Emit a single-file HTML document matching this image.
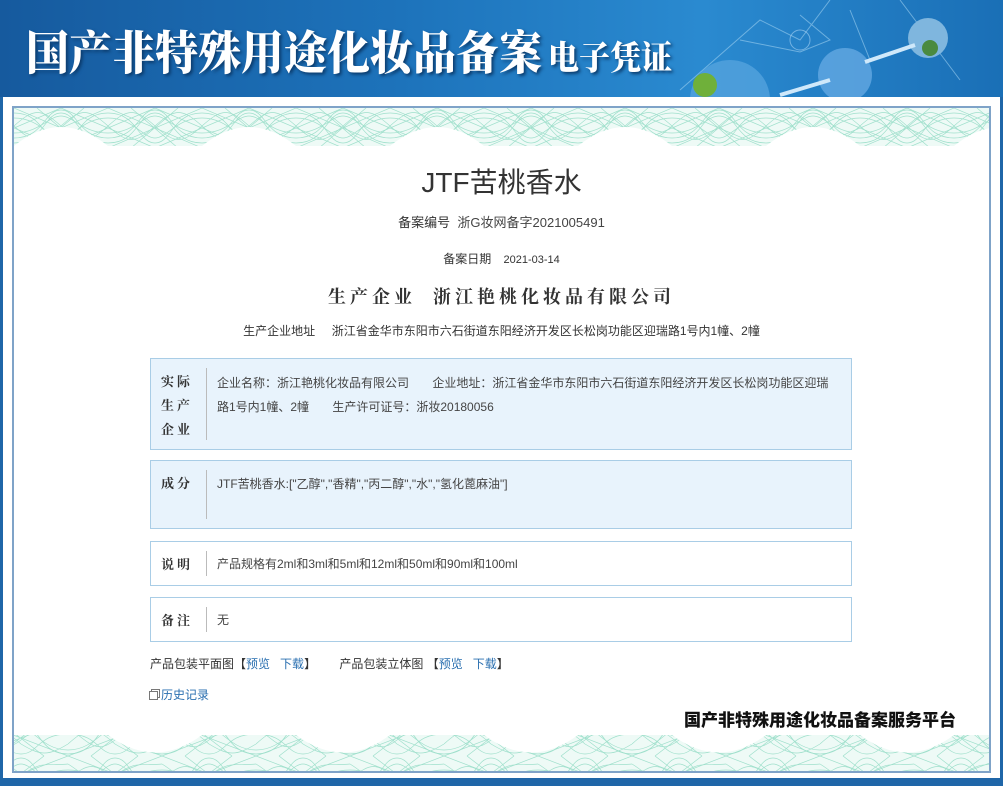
<!DOCTYPE html>
<html><head><meta charset="utf-8"><style>
*{margin:0;padding:0;box-sizing:border-box}
body{width:1003px;height:786px;overflow:hidden;background:#1f66a8;font-family:"Liberation Sans","Noto Sans CJK SC",sans-serif;font-size:12px;color:#333;position:relative}
.hdr{position:absolute;left:0;top:0;width:1003px;height:97px;background:linear-gradient(90deg,#165a9e 0%,#1d73bb 40%,#2a8ad0 70%,#1a6fb6 100%);overflow:hidden}
.hdr .t{position:absolute;left:26px;top:24px;color:#fff;font-family:"Noto Serif CJK SC","Noto Sans CJK SC",serif;font-weight:900;font-size:43px;letter-spacing:0px;text-shadow:2px 2px 3px #0b3a6a;line-height:50px;transform:scaleY(1.08);transform-origin:top left;white-space:nowrap}
.hdr .t span{font-size:31px;margin-left:6px}
.outer{position:absolute;left:3px;top:97px;width:997px;height:681px;background:#fff}
.frame{position:absolute;left:12px;top:106px;width:979px;height:667px;border:2px solid #7fa3c8;background:#fff}
.c{position:absolute;left:0;width:1003px;text-align:center}
.box{position:absolute;left:150px;width:702px;border:1px solid #a9cde6;background:#e8f3fc}
.box.w{background:#fff}
.lab{position:absolute;left:10px;width:36px;font-weight:bold;font-size:13px;color:#333;letter-spacing:3px;line-height:24px;font-family:"Noto Serif CJK SC",serif}
.div{position:absolute;left:55px;top:9px;bottom:9px;border-left:1px solid #bbb}
.txt{position:absolute;left:66px;right:14px;font-size:12px;line-height:24px;color:#444}
a{color:#2a6fb0;text-decoration:none}
</style></head><body>
<div class="hdr">
<svg width="1003" height="97" style="position:absolute;left:0;top:0">
<g stroke="#9fd0f0" stroke-width="1" fill="none" opacity=".6"><path d="M680 90 L760 20 L800 40 L830 0 M740 40 L800 52 L830 40 L800 15 M900 0 L960 80 M850 10 L870 60"/></g>
<circle cx="730" cy="100" r="40" fill="#5aa6e0" opacity=".7"/><circle cx="705" cy="85" r="12" fill="#6fb03a"/>
<circle cx="845" cy="75" r="27" fill="#5fa6e0" opacity=".85"/>
<circle cx="928" cy="38" r="20" fill="#7fb6de"/><circle cx="930" cy="48" r="8" fill="#4a8a40"/>
<path d="M780 95 L830 80 M865 62 L915 45" stroke="#cfe8fa" stroke-width="4"/>
<circle cx="800" cy="40" r="10" fill="none" stroke="#a8d4f5" opacity=".6"/>
</svg>
<div class="t">国产非特殊用途化妆品备案<span>电子凭证</span></div>
</div>
<div class="outer"></div>
<div class="frame">
<svg width="975" height="663" style="position:absolute;left:0;top:0">
<defs>
<pattern id="p" width="94" height="40" patternUnits="userSpaceOnUse">
<rect width="94" height="40" fill="#eefaf6"/>
<g fill="none" stroke="#9fe0cc" stroke-width=".7">
<path d="M0 35 C30 35 30 5 47 5 C64 5 64 35 94 35"/><path d="M0 30 C30 30 30 2 47 2 C64 2 64 30 94 30"/>
<path d="M0 25 C25 25 35 8 47 8 C59 8 69 25 94 25"/><path d="M0 5 C30 5 30 35 47 35 C64 35 64 5 94 5"/>
<path d="M0 10 C25 10 35 30 47 30 C59 30 69 10 94 10"/><path d="M0 18 C20 0 27 0 47 18 C67 36 74 36 94 18"/>
<path d="M0 18 C20 36 27 36 47 18 C67 0 74 0 94 18"/><path d="M0 0 L94 40 M0 40 L94 0 M0 20 L47 0 L94 20 L47 40Z"/>
<path d="M23 0 L70 40 M70 0 L23 40"/>
</g></pattern>
<pattern id="q" width="94" height="36" patternUnits="userSpaceOnUse" x="-40">
<rect width="94" height="36" fill="#eefaf6"/>
<g fill="none" stroke="#9fe0cc" stroke-width=".7">
<path d="M0 34 C30 34 30 2 47 2 C64 2 64 34 94 34"/><path d="M0 30 C25 30 35 8 47 8 C59 8 69 30 94 30"/>
<path d="M0 24 C20 6 27 6 47 24 C67 36 74 36 94 24"/><path d="M0 14 C30 14 30 34 47 34 C64 34 64 14 94 14"/>
<path d="M0 8 C20 20 27 36 47 20 C67 4 74 10 94 8"/><path d="M0 0 L94 36 M0 36 L94 0 M23 0 L70 36 M70 0 L23 36"/>
</g></pattern>
</defs>
<rect x="0" y="0" width="975" height="38" fill="url(#p)"/>
<path d="M0 38 Q47 0 94 38 T188 38 T282 38 T376 38 T470 38 T564 38 T658 38 T752 38 T846 38 T940 38 T1034 38 L1034 42 L0 42Z" fill="#fff"/>
<rect x="0" y="627" width="975" height="36" fill="url(#q)"/>
<path d="M0 627 Q47 592 94 627 T188 627 T282 627 T376 627 T470 627 T564 627 T658 627 T752 627 T846 627 T940 627 T1034 627 L1034 600 L0 600Z" fill="#fff"/>
</svg>
</div>
<div class="c" style="top:165px;font-size:28px;color:#333;line-height:36px">JTF苦桃香水</div>
<div class="c" style="top:214px;font-size:13px;line-height:18px;color:#333">备案编号&nbsp; <span style="color:#444">浙G妆网备字2021005491</span></div>
<div class="c" style="top:251px;font-size:11px;line-height:16px"><span style="font-size:12px">备案日期</span>&nbsp;&nbsp;&nbsp; 2021-03-14</div>
<div class="c" style="top:283px;font-size:18px;font-weight:bold;letter-spacing:4px;line-height:26px;font-family:'Noto Serif CJK SC',serif;color:#333">生产企业&nbsp; 浙江艳桃化妆品有限公司</div>
<div class="c" style="top:322px;font-size:12px;line-height:18px;color:#333">生产企业地址 &nbsp; &nbsp; 浙江省金华市东阳市六石街道东阳经济开发区长松岗功能区迎瑞路1号内1幢、2幢</div>
<div class="box" style="top:358px;height:92px"><div class="lab" style="top:10px">实际<br>生产<br>企业</div><div class="div"></div><div class="txt" style="top:12px">企业名称：浙江艳桃化妆品有限公司 &nbsp; &nbsp; &nbsp; 企业地址：浙江省金华市东阳市六石街道东阳经济开发区长松岗功能区迎瑞路1号内1幢、2幢 &nbsp; &nbsp; &nbsp; 生产许可证号：浙妆20180056</div></div>
<div class="box" style="top:460px;height:69px"><div class="lab" style="top:10px">成分</div><div class="div"></div><div class="txt" style="top:11px">JTF苦桃香水:["乙醇","香精","丙二醇","水","氢化蓖麻油"]</div></div>
<div class="box w" style="top:541px;height:45px"><div class="lab" style="top:10px">说明</div><div class="div"></div><div class="txt" style="top:10px">产品规格有2ml和3ml和5ml和12ml和50ml和90ml和100ml</div></div>
<div class="box w" style="top:597px;height:45px"><div class="lab" style="top:10px">备注</div><div class="div"></div><div class="txt" style="top:10px">无</div></div>
<div style="position:absolute;left:150px;top:655px;line-height:18px">产品包装平面图【<a>预览</a> &nbsp; <a>下载</a>】 &nbsp; &nbsp; &nbsp; 产品包装立体图 【<a>预览</a> &nbsp; <a>下载</a>】</div>
<div style="position:absolute;left:149px;top:686px;line-height:18px"><span style="display:inline-block;width:9px;height:9px;border:1px solid #777;margin-right:3px;vertical-align:-1px;box-shadow:2px -2px 0 -1px #fff,2px -2px 0 0 #777"></span><a>历史记录</a></div>
<div style="position:absolute;left:684px;top:710px;font-size:17px;font-weight:900;color:#111;line-height:22px;letter-spacing:0">国产非特殊用途化妆品备案服务平台</div>
</body></html>
